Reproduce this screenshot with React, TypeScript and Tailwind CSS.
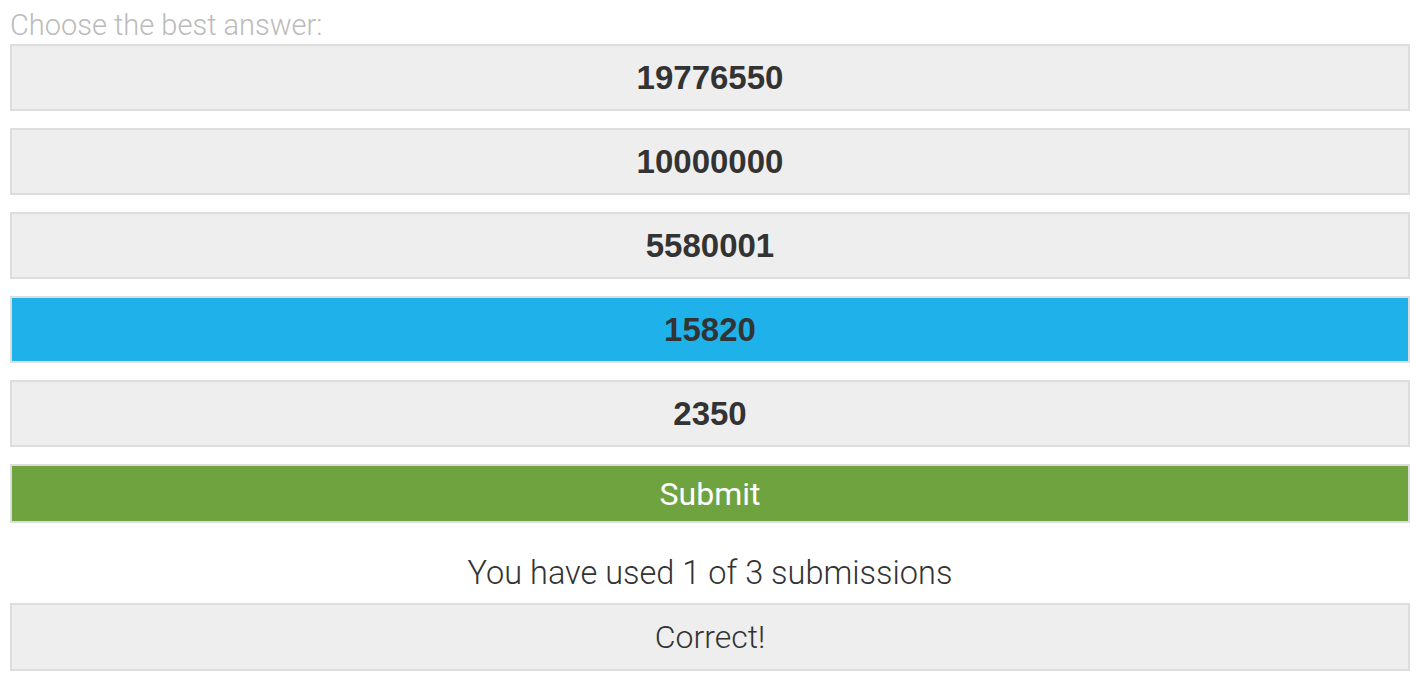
const OPTIONS = ['19776550', '10000000', '5580001', '15820', '2350']
const SELECTED = '15820'

export default function App() {
  return (
    <div className="w-[1428px] h-[684px] bg-white px-[10px] font-['Liberation_Sans',Arial,sans-serif] text-[#333]">
      <p className="h-[44px] pt-[8px] text-[29px] leading-[34px] font-light text-[#bbb] font-['Roboto','Liberation_Sans',sans-serif]">
        Choose the best answer:
      </p>

      <div className="w-[1400px] flex flex-col gap-[17px]">
        {OPTIONS.map(o => (
          <button
            key={o}
            className={`h-[67px] w-full border-2 border-[#ddd] text-[33px] font-bold ${
              o === SELECTED ? 'bg-[#1fb2ea]' : 'bg-[#eee]'
            }`}
          >
            {o}
          </button>
        ))}
        <button className="h-[59px] w-full border-2 border-[#ddd] bg-[#6fa33f] text-white text-[32px] font-['Roboto','Liberation_Sans',sans-serif]">
          Submit
        </button>
      </div>

      <p className="w-[1400px] h-[80px] pt-[28px] text-center text-[32.5px] leading-[44px] font-light font-['Roboto','Liberation_Sans',sans-serif]">
        You have used 1 of 3 submissions
      </p>

      <div className="w-[1400px] h-[68px] border-2 border-[#ddd] bg-[#eee] flex items-center justify-center text-[32px] font-light font-['Roboto','Liberation_Sans',sans-serif]">
        Correct!
      </div>
    </div>
  )
}
